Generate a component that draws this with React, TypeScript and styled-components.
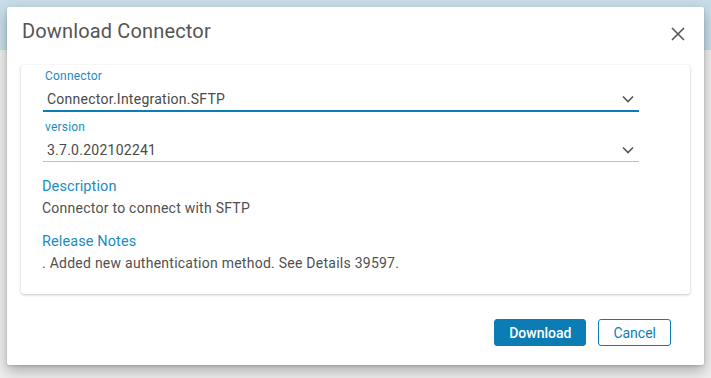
import styled, { createGlobalStyle } from "styled-components";

const GlobalStyle = createGlobalStyle`
    html, body {
        margin: 0;
        padding: 0;
    }
    body {
        font-family: Roboto, "Liberation Sans", sans-serif;
        background: #ececec;
    }
`;

const BLUE = "#0b7db4";
const LABEL_BLUE = "#1a8cc2";

const Chevron = () => (
    <svg width="12" height="8" viewBox="0 0 12 8">
        <path d="M1 1.5 L6 6.5 L11 1.5" fill="none" stroke="#555" strokeWidth="1.6" />
    </svg>
);

const CloseIcon = () => (
    <svg width="14" height="14" viewBox="0 0 14 14">
        <path d="M1 1 L13 13 M13 1 L1 13" fill="none" stroke="#555" strokeWidth="1.6" />
    </svg>
);

type FieldProps = { label: string; value: string; focused?: boolean };

const SelectField = ({ label, value, focused }: FieldProps) => (
    <Field>
        <FieldLabel>{label}</FieldLabel>
        <FieldValue $focused={focused}>
            <span>{value}</span>
            <Chevron />
        </FieldValue>
    </Field>
);

export default function App() {
    return (
        <Page>
            <GlobalStyle />
            <Dialog>
                <Header>
                    <Title>Download Connector</Title>
                    <CloseButton aria-label="close">
                        <CloseIcon />
                    </CloseButton>
                </Header>
                <Card>
                    <SelectField label="Connector" value="Connector.Integration.SFTP" focused />
                    <SelectField label="version" value="3.7.0.202102241" />
                    <Section>
                        <SectionTitle>Description</SectionTitle>
                        <SectionText>Connector to connect with SFTP</SectionText>
                    </Section>
                    <Section>
                        <SectionTitle>Release Notes</SectionTitle>
                        <SectionText>. Added new authentication method. See Details 39597.</SectionText>
                    </Section>
                </Card>
                <Footer>
                    <Button $primary>Download</Button>
                    <Button>Cancel</Button>
                </Footer>
            </Dialog>
        </Page>
    );
}

const Page = styled.div`
    width: 711px;
    height: 378px;
    box-sizing: border-box;
    padding: 7px;
    overflow: hidden;
    background: linear-gradient(#c6dde7 0, #c6dde7 50px, #eeeeee 50px);
`;

const Dialog = styled.div`
    width: 697px;
    height: 358px;
    box-sizing: border-box;
    background: #fff;
    border-radius: 2px;
    box-shadow: 0 6px 14px rgba(0, 0, 0, 0.28), 0 1px 3px rgba(0, 0, 0, 0.15);
    display: flex;
    flex-direction: column;
    padding: 0 14px 0 14px;
`;

const Header = styled.div`
    display: flex;
    align-items: flex-start;
    justify-content: space-between;
    box-sizing: border-box;
    height: 58px;
    padding: 12px 5px 0 1px;
`;

const Title = styled.h2`
    margin: 0;
    font-size: 20px;
    font-weight: 400;
    color: #555;
    line-height: 24px;
    letter-spacing: 0.15px;
`;

const CloseButton = styled.button`
    border: none;
    background: none;
    padding: 0;
    margin-top: 8px;
    display: flex;
    cursor: pointer;
`;

const Card = styled.div`
    border-radius: 3px;
    background: #fff;
    box-shadow: 0 1px 3px rgba(0, 0, 0, 0.22), 0 0 1px rgba(0, 0, 0, 0.08);
    padding: 4px 0 21px 21px;
    display: flex;
    flex-direction: column;
`;

const Field = styled.div`
    width: 596px;
    margin-left: 1px;
    margin-bottom: 8px;
`;

const FieldLabel = styled.div`
    font-size: 12px;
    line-height: 14px;
    color: ${LABEL_BLUE};
    padding-left: 2px;
    letter-spacing: 0.2px;
`;

const FieldValue = styled.div<{ $focused?: boolean }>`
    display: flex;
    align-items: center;
    justify-content: space-between;
    padding: 6px 5px 1px 4px;
    font-size: 14px;
    line-height: 20px;
    color: #4a4a4a;
    letter-spacing: 0.25px;
    border-bottom: ${(p) => (p.$focused ? `2px solid ${BLUE}` : "1px solid #bdbdbd")};
    margin-bottom: ${(p) => (p.$focused ? "0" : "1px")};
`;

const Section = styled.div`
    margin-top: 6px;
    & + & {
        margin-top: 14px;
    }
`;

const SectionTitle = styled.div`
    font-size: 14.5px;
    line-height: 20px;
    color: ${LABEL_BLUE};
    margin-bottom: 1px;
    letter-spacing: 0.1px;
`;

const SectionText = styled.div`
    font-size: 14px;
    line-height: 20px;
    color: #505050;
    letter-spacing: 0.25px;
`;

const Footer = styled.div`
    display: flex;
    justify-content: flex-end;
    gap: 12px;
    margin-top: auto;
    padding: 0 19px 19px 0;
`;

const Button = styled.button<{ $primary?: boolean }>`
    font-family: Roboto, "Liberation Sans", sans-serif;
    font-size: 14px;
    height: 27px;
    box-sizing: border-box;
    border-radius: 3px;
    padding: 0 14px;
    cursor: pointer;
    border: 1px solid ${BLUE};
    background: ${(p) => (p.$primary ? BLUE : "#fff")};
    color: ${(p) => (p.$primary ? "#fff" : BLUE)};
    font-weight: ${(p) => (p.$primary ? 500 : 400)};
    min-width: ${(p) => (p.$primary ? "92px" : "72px")};
`;
